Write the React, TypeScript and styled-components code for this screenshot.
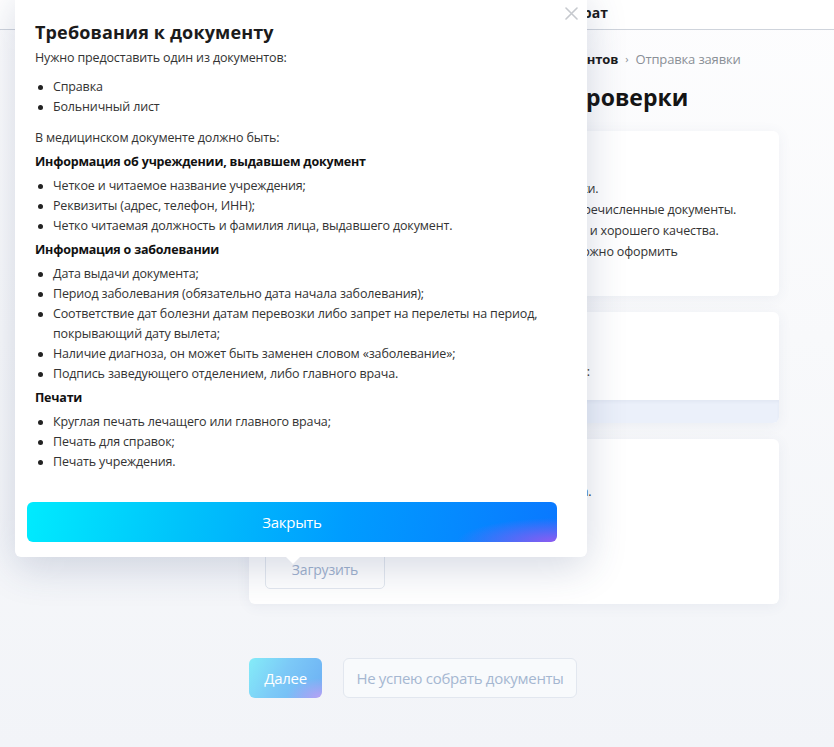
import styled, { createGlobalStyle } from 'styled-components';

const GlobalStyle = createGlobalStyle`
  html, body {
    margin: 0;
    padding: 0;
  }
  body {
    font-family: 'Open Sans', 'Noto Sans', sans-serif;
    color: #333;
    background: #f4f6f9;
  }
  * {
    box-sizing: border-box;
  }
`;

const Page = styled.div`
  position: relative;
  min-height: 747px;
  overflow: hidden;
  background: linear-gradient(180deg, #fdfdfe 0%, #f8f9fb 45%, #f2f4f8 100%);
`;

const Header = styled.header`
  height: 30px;
  background: #fff;
  border-bottom: 1px solid #cfd4dc;
  display: flex;
  align-items: flex-start;
  padding: 3px 0 0 471px;
`;

const Nav = styled.nav`
  display: flex;
  gap: 28px;
  font-size: 14px;
  font-weight: 700;
  color: #1a1a1a;
  line-height: 20px;
`;

const Main = styled.main`
  width: 530px;
  margin-left: 249px;
  padding-top: 20px;
`;

const Steps = styled.div`
  display: flex;
  align-items: center;
  gap: 7px;
  font-size: 13px;
  line-height: 18px;
`;

const Step = styled.span<{ $done?: boolean }>`
  color: ${(p) => (p.$done ? '#1a1a1a' : '#8a8f96')};
  font-weight: ${(p) => (p.$done ? 700 : 400)};
  letter-spacing: -0.15px;
`;

const Chevron = styled.span`
  color: #8a8f96;
  font-size: 11px;
`;

const PageTitle = styled.h1`
  margin: 14px 0 19px;
  font-size: 23px;
  line-height: 30px;
  font-weight: 700;
  color: #141414;
  white-space: nowrap;
`;

const Card = styled.section`
  background: #fff;
  border-radius: 6px;
  box-shadow: 0 2px 14px rgba(70, 90, 130, 0.07);
  margin-bottom: 16px;
  overflow: hidden;
`;

const CardBody = styled.div<{ $pt?: number; $pb?: number }>`
  padding: ${(p) => p.$pt ?? 20}px 16px ${(p) => p.$pb ?? 16}px;
`;

const CardTitle = styled.h3<{ $mb?: number }>`
  margin: 0 0 ${(p) => p.$mb ?? 3}px;
  font-size: 16px;
  line-height: 24px;
  font-weight: 700;
  color: #1a1a1a;
`;

const Line = styled.p<{ $ls?: number }>`
  margin: 0;
  font-size: 12.5px;
  letter-spacing: ${(p) => p.$ls ?? -0.15}px;
  line-height: 21px;
  color: #333;
  white-space: nowrap;
`;

const CardFooter = styled.div`
  height: 23px;
  background: #ebf0fa;
  box-shadow: inset 0 2px 3px rgba(80, 100, 140, 0.06);
`;

const UploadButton = styled.button`
  margin-top: 26px;
  width: 120px;
  height: 40px;
  border: 1px solid #e3e8ef;
  border-radius: 5px;
  background: #fff;
  font-family: inherit;
  font-size: 14px;
  letter-spacing: -0.2px;
  color: #9fb2ce;
`;

const Actions = styled.div`
  display: flex;
  gap: 21px;
  margin-top: 54px;
`;

const NextButton = styled.button`
  width: 73px;
  height: 40px;
  border: none;
  border-radius: 6px;
  font-family: inherit;
  font-size: 15px;
  letter-spacing: -0.3px;
  color: #fff;
  background: radial-gradient(ellipse 36px 20px at 100% 100%, rgba(190, 160, 245, 0.95), rgba(190, 160, 245, 0) 100%),
    linear-gradient(120deg, #84ecf8 0%, #7cc9f7 45%, #6caff4 100%);
`;

const LaterButton = styled.button`
  width: 234px;
  height: 40px;
  border: 1px solid #e2e7ef;
  border-radius: 6px;
  background: #f8fafc;
  font-family: inherit;
  font-size: 15px;
  letter-spacing: -0.3px;
  color: #a5b7d1;
`;

const Popover = styled.div`
  position: absolute;
  left: 15px;
  top: -8px;
  width: 572px;
  padding: 28px 30px 15px 20px;
  background: #fff;
  border-radius: 6px;
  box-shadow: 0 10px 40px rgba(45, 65, 115, 0.2);

  &::after {
    content: '';
    position: absolute;
    left: 270px;
    bottom: -7px;
    border-left: 8px solid transparent;
    border-right: 8px solid transparent;
    border-top: 8px solid #fff;
  }
`;

const CloseIcon = styled.button`
  position: absolute;
  top: 13px;
  right: 8px;
  width: 16px;
  height: 16px;
  padding: 0;
  border: none;
  background: none;
  display: flex;
  align-items: center;
  justify-content: center;
`;

const Title = styled.h2`
  margin: 0 0 4px;
  font-size: 18px;
  letter-spacing: 0.15px;
  line-height: 24px;
  font-weight: 700;
  color: #1b1b1b;
`;

const Text = styled.p<{ $mt?: number }>`
  margin: ${(p) => p.$mt ?? 0}px 0 0;
  font-size: 12.5px;
  letter-spacing: -0.15px;
  line-height: 20px;
  color: #333;
`;

const Heading = styled.h4`
  margin: 4px 0 0;
  font-size: 12.5px;
  letter-spacing: -0.2px;
  line-height: 20px;
  font-weight: 700;
  color: #111;
`;

const List = styled.ul<{ $mt?: number }>`
  margin: ${(p) => p.$mt ?? 4}px 0 0;
  padding: 0;
  list-style: none;
`;

const Item = styled.li`
  position: relative;
  padding-left: 18px;
  font-size: 12.5px;
  letter-spacing: -0.15px;
  line-height: 20px;
  color: #333;

  &::before {
    content: '';
    position: absolute;
    left: 3px;
    top: 8px;
    width: 5px;
    height: 5px;
    border-radius: 50%;
    background: #222;
  }
`;

const CloseButton = styled.button`
  display: block;
  margin: 30px 0 0 -8px;
  width: 530px;
  height: 40px;
  border: none;
  border-radius: 6px;
  font-family: inherit;
  font-size: 15px;
  letter-spacing: -0.3px;
  color: #fff;
  background: radial-gradient(ellipse 100px 24px at 100% 100%, rgba(150, 90, 240, 0.95), rgba(150, 90, 240, 0) 100%),
    linear-gradient(100deg, #00ebfe 0%, #00c2fb 30%, #009cff 60%, #0a78ff 100%);
`;

export default function App() {
  return (
    <>
      <GlobalStyle />
      <Page>
        <Header>
          <Nav>
            <span>Обмен</span>
            <span>Возврат</span>
          </Nav>
        </Header>
        <Main>
          <Steps>
            <Step $done>Мои заказы</Step>
            <Chevron>›</Chevron>
            <Step $done>Выбор причины</Step>
            <Chevron>›</Chevron>
            <Step $done>Загрузка документов</Step>
            <Chevron>›</Chevron>
            <Step>Отправка заявки</Step>
          </Steps>
          <PageTitle>Загрузите документы для проверки</PageTitle>

          <Card>
            <CardBody $pb={13}>
              <CardTitle>Как загрузить документы</CardTitle>
              <Line $ls={-0.3}>Документы подтверждают причину отказа от перевозки.</Line>
              <Line>Вам нужно загрузить в соответствующие поля все перечисленные документы.</Line>
              <Line>Фото или сканы должны быть цветными, без обрезки и хорошего качества.</Line>
              <Line>Если собрать документы не получается, то возврат можно оформить</Line>
              <Line>позже.</Line>
            </CardBody>
          </Card>

          <Card>
            <CardBody $pb={18}>
              <CardTitle $mb={5}>Пассажир</CardTitle>
              <Line $ls={-0.22}>Выберите пассажира, которому нужен возврат билета:</Line>
            </CardBody>
            <CardFooter />
          </Card>

          <Card>
            <CardBody $pt={16} $pb={15}>
              <CardTitle $mb={2}>Медицинский документ</CardTitle>
              <Line>Медицинская справка либо больничный лист туриста.</Line>
              <Line>Требования к документу</Line>
              <UploadButton>Загрузить</UploadButton>
            </CardBody>
          </Card>

          <Actions>
            <NextButton>Далее</NextButton>
            <LaterButton>Не успею собрать документы</LaterButton>
          </Actions>
        </Main>

        <Popover>
          <CloseIcon aria-label="Закрыть">
            <svg width="13" height="13" viewBox="0 0 13 13">
              <path d="M1 1 L12 12 M12 1 L1 12" stroke="#c6c9ce" strokeWidth="1.6" strokeLinecap="round" />
            </svg>
          </CloseIcon>
          <Title>Требования к документу</Title>
          <Text>Нужно предоставить один из документов:</Text>
          <List $mt={9}>
            <Item>Справка</Item>
            <Item>Больничный лист</Item>
          </List>
          <Text $mt={11}>В медицинском документе должно быть:</Text>
          <Heading>Информация об учреждении, выдавшем документ</Heading>
          <List>
            <Item>Четкое и читаемое название учреждения;</Item>
            <Item>Реквизиты (адрес, телефон, ИНН);</Item>
            <Item>Четко читаемая должность и фамилия лица, выдавшего документ.</Item>
          </List>
          <Heading>Информация о заболевании</Heading>
          <List>
            <Item>Дата выдачи документа;</Item>
            <Item>Период заболевания (обязательно дата начала заболевания);</Item>
            <Item>
              Соответствие дат болезни датам перевозки либо запрет на перелеты на период, покрывающий дату
              вылета;
            </Item>
            <Item>Наличие диагноза, он может быть заменен словом «заболевание»;</Item>
            <Item>Подпись заведующего отделением, либо главного врача.</Item>
          </List>
          <Heading>Печати</Heading>
          <List>
            <Item>Круглая печать лечащего или главного врача;</Item>
            <Item>Печать для справок;</Item>
            <Item>Печать учреждения.</Item>
          </List>
          <CloseButton>Закрыть</CloseButton>
        </Popover>
      </Page>
    </>
  );
}
